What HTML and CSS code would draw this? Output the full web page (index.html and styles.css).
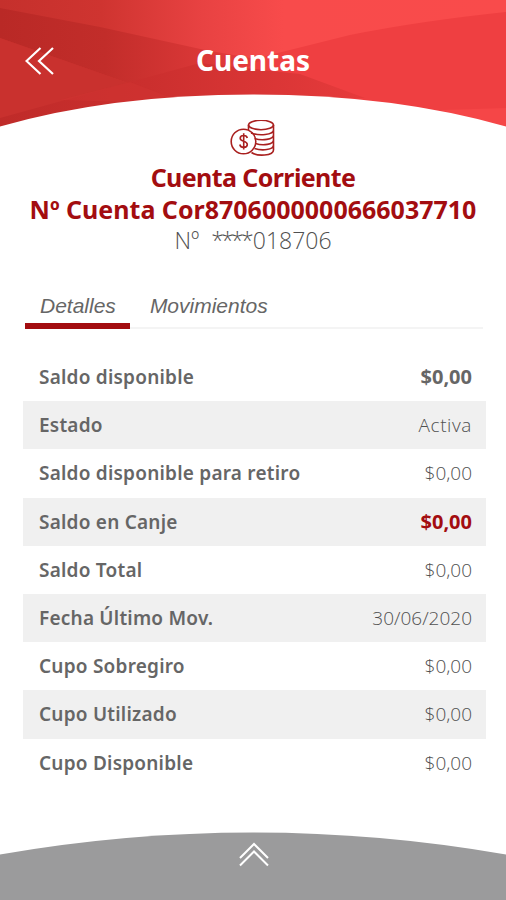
FILE: index.html
```html
<!DOCTYPE html>
<html lang="es">
<head>
    <meta charset="UTF-8">
    <meta name="viewport" content="width=device-width, initial-scale=1.0">
    <title>Cuentas</title>
    <link rel="stylesheet" href="styles.css">
</head>
<body>
    <div class="screen">
        <header class="header">
            <svg class="header-bg" viewBox="0 0 506 128" preserveAspectRatio="none">
                <defs>
                    <linearGradient id="red" gradientUnits="userSpaceOnUse" x1="0" y1="0" x2="506" y2="0">
                        <stop offset="0" stop-color="#c5302c"/>
                        <stop offset=".2" stop-color="#cf3430"/>
                        <stop offset=".4" stop-color="#e84242"/>
                        <stop offset=".56" stop-color="#f84b4b"/>
                        <stop offset="1" stop-color="#f94b4b"/>
                    </linearGradient>
                    <linearGradient id="shade" gradientUnits="userSpaceOnUse" x1="0" y1="0" x2="300" y2="0">
                        <stop offset="0" stop-color="#b92926"/>
                        <stop offset=".35" stop-color="#c22d2a"/>
                        <stop offset=".7" stop-color="#dc3838"/>
                        <stop offset="1" stop-color="#ef3f41"/>
                    </linearGradient>
                    <linearGradient id="low" gradientUnits="userSpaceOnUse" x1="0" y1="0" x2="370" y2="0">
                        <stop offset="0" stop-color="#bf2b29"/>
                        <stop offset=".4" stop-color="#cb2f2e"/>
                        <stop offset="1" stop-color="#e73b3c"/>
                    </linearGradient>
                </defs>
                <path fill="url(#red)" d="M0 0H506V128H0Z"/>
                <path fill="#ef3f41" d="M506 12Q420 21 350 35L190 75V128H506Z"/>
                <path fill="url(#shade)" d="M0 8L100 27L205 50L262 60L200 90L165 98L125 82L0 38Z"/>
                <path fill="#c9312e" d="M0 38L60 59L125 82L165 96L0 128Z"/>
                <path fill="url(#low)" d="M0 118L130 82L200 63L300 74L365 98L253 100L0 128Z"/>
                <path fill="#d23331" d="M130 82L172 98L125 102L60 100Z" opacity=".5"/>
                <path fill="#f54647" d="M440 110L506 108V128Z"/>
                <path fill="#fff" d="M0 128V126.5Q112 94.5 253 94.5T506 126.5V128Z"/>
            </svg>
            <a class="back" href="#" aria-label="Volver">
                <svg width="30" height="28" viewBox="0 0 30 28"><path d="M15.5 1L1.5 14L15.5 27M28 1L14 14L28 27"/></svg>
            </a>
            <h1>Cuentas</h1>
        </header>

        <section class="account">
            <svg class="coins" width="46" height="38" viewBox="0 0 46 38">
                <ellipse cx="31" cy="5" rx="12.5" ry="4.7"/>
                <path d="M18.5 5V10M43.5 5V30C43.5 36 27 36.5 21.5 32.5M43.5 10C43.5 15 29 16 21 13M43.5 15C43.5 19.5 32 21 24.5 18.5M43.5 20C43.5 24.5 33 26 25.5 23.5M43.5 25C43.5 30 32 31 24.5 28.5"/>
                <circle cx="13.5" cy="21.5" r="12.3"/>
                <path d="M17.3 18C16.5 14.4 10.2 14.9 10.2 18.2C10.2 22.1 17.3 20.3 17.3 24.5C17.3 28.3 10.5 28.3 9.8 24.5M13.7 13.3V29.5"/>
            </svg>
            <h2 class="account-type">Cuenta Corriente</h2>
            <h2 class="account-name">Nº Cuenta Cor8706000000666037710</h2>
            <p class="account-number">Nº &nbsp;<span class="stars">****</span>018706</p>
        </section>

        <nav class="tabs">
            <a class="tab active" href="#">Detalles</a>
            <a class="tab" href="#">Movimientos</a>
        </nav>

        <dl class="details">
            <div class="row"><dt>Saldo disponible</dt><dd class="bold">$0,00</dd></div>
            <div class="row"><dt>Estado</dt><dd class="status">Activa</dd></div>
            <div class="row"><dt>Saldo disponible para retiro</dt><dd>$0,00</dd></div>
            <div class="row"><dt>Saldo en Canje</dt><dd class="bold red">$0,00</dd></div>
            <div class="row"><dt>Saldo Total</dt><dd>$0,00</dd></div>
            <div class="row"><dt>Fecha Último Mov.</dt><dd>30/06/2020</dd></div>
            <div class="row"><dt>Cupo Sobregiro</dt><dd>$0,00</dd></div>
            <div class="row"><dt>Cupo Utilizado</dt><dd>$0,00</dd></div>
            <div class="row"><dt>Cupo Disponible</dt><dd>$0,00</dd></div>
        </dl>

        <footer class="footer">
            <svg class="footer-bg" viewBox="0 0 506 68" preserveAspectRatio="none">
                <path d="M0 68V22.5Q126 .5 253 .5T506 22.5V68Z"/>
            </svg>
            <svg class="up" width="32" height="25" viewBox="0 0 32 25"><path d="M2 16L16 2L30 16M2 23.5L16 9.5L30 23.5"/></svg>
        </footer>
    </div>
</body>
</html>
```
FILE: styles.css
```css
* {
    box-sizing: border-box;
}

body {
    margin: 0;
    background-color: #fff;
    font-family: "Noto Sans", "Open Sans", sans-serif;
    color: #666;
}

h1, h2, p, dl, dd {
    margin: 0;
}

a {
    color: inherit;
    text-decoration: none;
}

.screen {
    width: 506px;
    height: 900px;
    display: flex;
    flex-direction: column;
    overflow: hidden;
}

.header {
    position: relative;
    height: 120px;
    padding: 0 25px;
    display: grid;
    grid-template-columns: 30px 1fr 30px;
    align-items: start;
}

.header-bg {
    position: absolute;
    top: 0;
    left: 0;
    width: 506px;
    height: 128px;
    z-index: -1;
}

.back {
    height: 28px;
    margin-top: 47px;
}

.back svg {
    display: block;
    fill: none;
    stroke: #fff;
    stroke-width: 2.2;
}

h1 {
    margin-top: 41px;
    color: #fff;
    font-size: 28px;
    line-height: 38px;
    font-weight: 700;
    text-align: center;
}

.account {
    display: flex;
    flex-direction: column;
    align-items: center;
    white-space: nowrap;
}

.coins {
    display: block;
    fill: none;
    stroke: #a9201f;
    stroke-width: 1.6;
}

h2 {
    color: #a30d10;
    font-size: 25px;
    line-height: 32px;
    font-weight: 700;
}

.account-type {
    margin-top: 3px;
    letter-spacing: -0.6px;
}

.account-number {
    font-family: "Open Sans", sans-serif;
    font-size: 23px;
    line-height: 30px;
    font-weight: 300;
    color: #505050;
}

.stars {
    letter-spacing: -2.8px;
    margin-right: 2px;
}

.tabs {
    display: flex;
    height: 40px;
    margin: 35px 23px 0 25px;
    background: linear-gradient(#f4f4f4, #f4f4f4) 0 37px / 100% 2px no-repeat;
    font-family: "Liberation Sans", sans-serif;
    font-size: 21px;
    line-height: 24px;
    font-style: italic;
}

.tab {
    padding: 4px 14px 0 20px;
    height: 39px;
}

.active {
    padding-left: 15px;
    border-bottom: 6px solid #a30d10;
}

.details {
    margin: 23px 20px 0 23px;
}

.row {
    height: 48.2px;
    padding: 0 14px 0 16px;
    display: flex;
    justify-content: space-between;
    align-items: center;
    font-size: 19px;
    line-height: 26px;
}

.row:nth-child(even) {
    background-color: #f0f0f0;
}

dt {
    font-weight: 600;
    letter-spacing: 0.22px;
}

dd {
    font-family: "Open Sans", sans-serif;
    font-weight: 300;
    color: #505050;
}

.status {
    letter-spacing: 0.6px;
}

.bold {
    font-size: 20px;
    font-weight: 700;
    color: #666;
}

.red {
    color: #a30d10;
}

.footer {
    position: relative;
    height: 68px;
    margin-top: auto;
    padding: 10px 0 0 2px;
    text-align: center;
}

.footer-bg {
    position: absolute;
    top: 0;
    left: 0;
    width: 506px;
    height: 68px;
    fill: #9b9b9c;
    z-index: -1;
}

.up {
    fill: none;
    stroke: #fff;
    stroke-width: 2;
}
```
